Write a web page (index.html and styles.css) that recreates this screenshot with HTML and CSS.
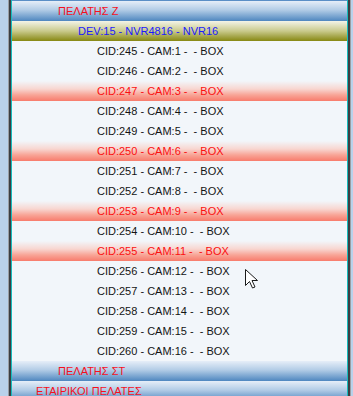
FILE: index.html
```html
<!DOCTYPE html>
<html>
<head>
<meta charset="utf-8">
<link rel="stylesheet" href="styles.css">
</head>
<body>
<div class="desk">
  <div class="frame">
    <div class="frame-dark">
      <div class="tree">
        <div class="row group lvl2 first">ΠΕΛΑΤΗΣ Ζ</div>
        <div class="row dev lvl3">DEV:15 - NVR4816 - NVR16</div>
        <div class="row cam lvl4">CID:245 - CAM:1 -  - BOX</div>
        <div class="row cam lvl4">CID:246 - CAM:2 -  - BOX</div>
        <div class="row cam off lvl4">CID:247 - CAM:3 -  - BOX</div>
        <div class="row cam lvl4">CID:248 - CAM:4 -  - BOX</div>
        <div class="row cam lvl4">CID:249 - CAM:5 -  - BOX</div>
        <div class="row cam off lvl4">CID:250 - CAM:6 -  - BOX</div>
        <div class="row cam lvl4">CID:251 - CAM:7 -  - BOX</div>
        <div class="row cam lvl4">CID:252 - CAM:8 -  - BOX</div>
        <div class="row cam off lvl4">CID:253 - CAM:9 -  - BOX</div>
        <div class="row cam lvl4">CID:254 - CAM:10 -  - BOX</div>
        <div class="row cam off lvl4">CID:255 - CAM:11 -  - BOX</div>
        <div class="row cam lvl4">CID:256 - CAM:12 -  - BOX</div>
        <div class="row cam lvl4">CID:257 - CAM:13 -  - BOX</div>
        <div class="row cam lvl4">CID:258 - CAM:14 -  - BOX</div>
        <div class="row cam lvl4">CID:259 - CAM:15 -  - BOX</div>
        <div class="row cam lvl4">CID:260 - CAM:16 -  - BOX</div>
        <div class="row group lvl2">ΠΕΛΑΤΗΣ ΣΤ</div>
        <div class="row group lvl1">ΕΤΑΙΡΙΚΟΙ ΠΕΛΑΤΕΣ</div>
      </div>
    </div>
  </div>
</div>
<svg class="cursor" width="13" height="20" viewBox="0 0 13 20">
  <path d="M0.5 0.5 L0.5 16.5 L4.5 12.5 L7.5 19 L10 18 L7 11.5 L12.5 11.5 Z" fill="#ffffff" stroke="#1a1a1a" stroke-width="1"/>
</svg>
</body>
</html>
```

FILE: styles.css
```css
html, body {
  margin: 0;
  padding: 0;
  background: #b9d1ea;
  width: 353px;
  height: 396px;
  overflow: hidden;
}
.desk {
  padding: 0 2px 0 8px;
  height: 396px;
  box-sizing: border-box;
}
.frame {
  border-left: 1px solid #9a9ea4;
  border-right: 1px solid #9a9ea4;
  height: 100%;
}
.frame-dark {
  border-left: 2px solid #3b3f44;
  border-right: 2px solid #3b3f44;
  height: 100%;
}
.tree {
  border-left: 1px solid #16bcbc;
  border-right: 1px solid #16bcbc;
  height: 100%;
  background: #f2f6fa;
  overflow: hidden;
  font-family: "Liberation Sans", Arial, sans-serif;
  font-size: 11px;
}
.row {
  height: 20px;
  line-height: 20px;
  white-space: pre;
  box-sizing: border-box;
}
.lvl1 { padding-left: 24px; }
.lvl2 { padding-left: 46px; }
.lvl3 { padding-left: 66px; }
.lvl4 { padding-left: 85px; }
.group {
  color: #f5101c;
  background: linear-gradient(to bottom, #e6eef8 0%, #b2cce6 45%, #4f87c0 100%);
}
.group.first {
  border-top: 1px solid #5b8fc6;
  height: 21px;
}
.dev {
  color: #1a1aff;
  background: linear-gradient(to bottom, #f3f4e8 0%, #c9ca8c 50%, #878812 100%);
}
.cam {
  color: #141414;
}
.cam.off {
  color: #fa1010;
  background: linear-gradient(to bottom, #f2f6fa 0%, #f8d6d0 40%, #f8a496 70%, #f87c6c 100%);
}
.cursor {
  position: absolute;
  left: 245px;
  top: 269px;
}
```
